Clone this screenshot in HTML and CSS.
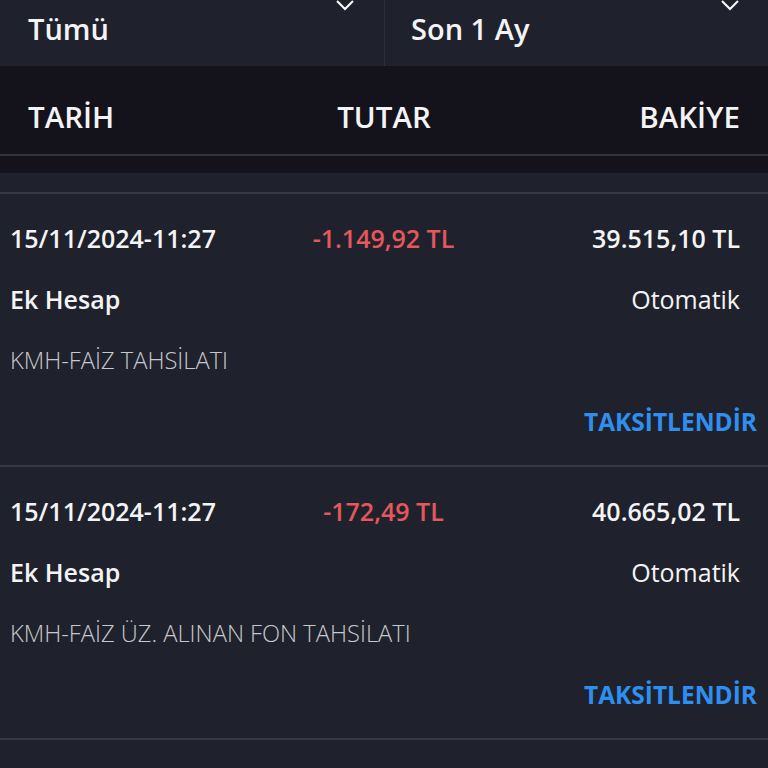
FILE: index.html
```html
<!DOCTYPE html>
<html>
<head lang="tr">
    <meta charset="UTF-8">
    <title>Hesap Hareketleri</title>
    <link rel="stylesheet" href="styles.css">
</head>
<body>
    <div class="filters">
        <div class="select">
            <span>Tümü</span>
            <svg class="chevron" width="20" height="12" viewBox="0 0 20 12"><polyline points="2,2 10,10 18,2" fill="none" stroke="#fff" stroke-width="2"/></svg>
        </div>
        <div class="select">
            <span>Son 1 Ay</span>
            <svg class="chevron" width="20" height="12" viewBox="0 0 20 12"><polyline points="2,2 10,10 18,2" fill="none" stroke="#fff" stroke-width="2"/></svg>
        </div>
    </div>

    <div class="thead">
        <span>TARİH</span>
        <span>TUTAR</span>
        <span class="right">BAKİYE</span>
    </div>
    <div class="gap"></div>

    <ul class="list">
        <li class="item">
            <div class="line">
                <span class="date">15/11/2024-11:27</span>
                <span class="amount">-1.149,92 TL</span>
                <span class="balance">39.515,10 TL</span>
            </div>
            <div class="line split">
                <span class="account">Ek Hesap</span>
                <span class="type">Otomatik</span>
            </div>
            <div class="line desc">KMH-FAİZ TAHSİLATI</div>
            <div class="line action"><a href="#">TAKSİTLENDİR</a></div>
        </li>
        <li class="item">
            <div class="line">
                <span class="date">15/11/2024-11:27</span>
                <span class="amount">-172,49 TL</span>
                <span class="balance">40.665,02 TL</span>
            </div>
            <div class="line split">
                <span class="account">Ek Hesap</span>
                <span class="type">Otomatik</span>
            </div>
            <div class="line desc">KMH-FAİZ ÜZ. ALINAN FON TAHSİLATI</div>
            <div class="line action"><a href="#">TAKSİTLENDİR</a></div>
        </li>
    </ul>
</body>
</html>
```

FILE: styles.css
```css
body{
    margin: 0;
    background-color: #1f222c;
    color: #f4f4f6;
    font-family: "Open Sans", "DejaVu Sans", sans-serif;
    overflow: hidden;
}

.filters{
    display: grid;
    grid-template-columns: 385px 1fr;
    height: 66px;
    background-color: #1f222c;
}

.filters .select{
    display: flex;
    justify-content: space-between;
    align-items: flex-start;
    padding: 0 28px 0 28px;
    font-size: 29px;
    font-weight: 600;
    line-height: 58px;
}

.filters .select:first-child{
    border-right: 1px solid #2c2f38;
    padding-right: 29px;
}

.filters .select:last-child{
    padding-left: 26px;
}

.chevron{
    margin-top: -1px;
}

.thead{
    display: grid;
    grid-template-columns: 1fr auto 1fr;
    height: 74px;
    padding: 14px 28px 0 28px;
    background-color: #14131b;
    border-bottom: 2px solid #33343d;
    font-size: 29.5px;
    font-weight: 600;
    line-height: 74px;
}

.thead .right{
    text-align: right;
}

.gap{
    height: 17px;
    background-color: #14131b;
}

.list{
    list-style: none;
    margin: 0;
    padding: 19px 0 0 0;
}

.item{
    border-top: 2px solid #363843;
    padding: 14px 11px 13px 10px;
}

.item:last-child{
    border-bottom: 2px solid #363843;
}

.line{
    height: 61px;
    line-height: 61px;
    font-size: 25px;
    font-weight: 600;
    white-space: nowrap;
}

.item .line:first-child{
    display: grid;
    grid-template-columns: 1fr auto 1fr;
}

.amount{
    color: #e5575d;
}

.balance,
.type{
    text-align: right;
    padding-right: 17px;
}

.split{
    display: flex;
    justify-content: space-between;
}

.type{
    font-weight: 400;
}

.desc{
    font-size: 23.7px;
    font-weight: 300;
    color: #c7c8cd;
}

.action{
    text-align: right;
    font-size: 24.5px;
}

.action a{
    color: #2e8ff0;
    font-weight: 700;
    text-decoration: none;
}
```
